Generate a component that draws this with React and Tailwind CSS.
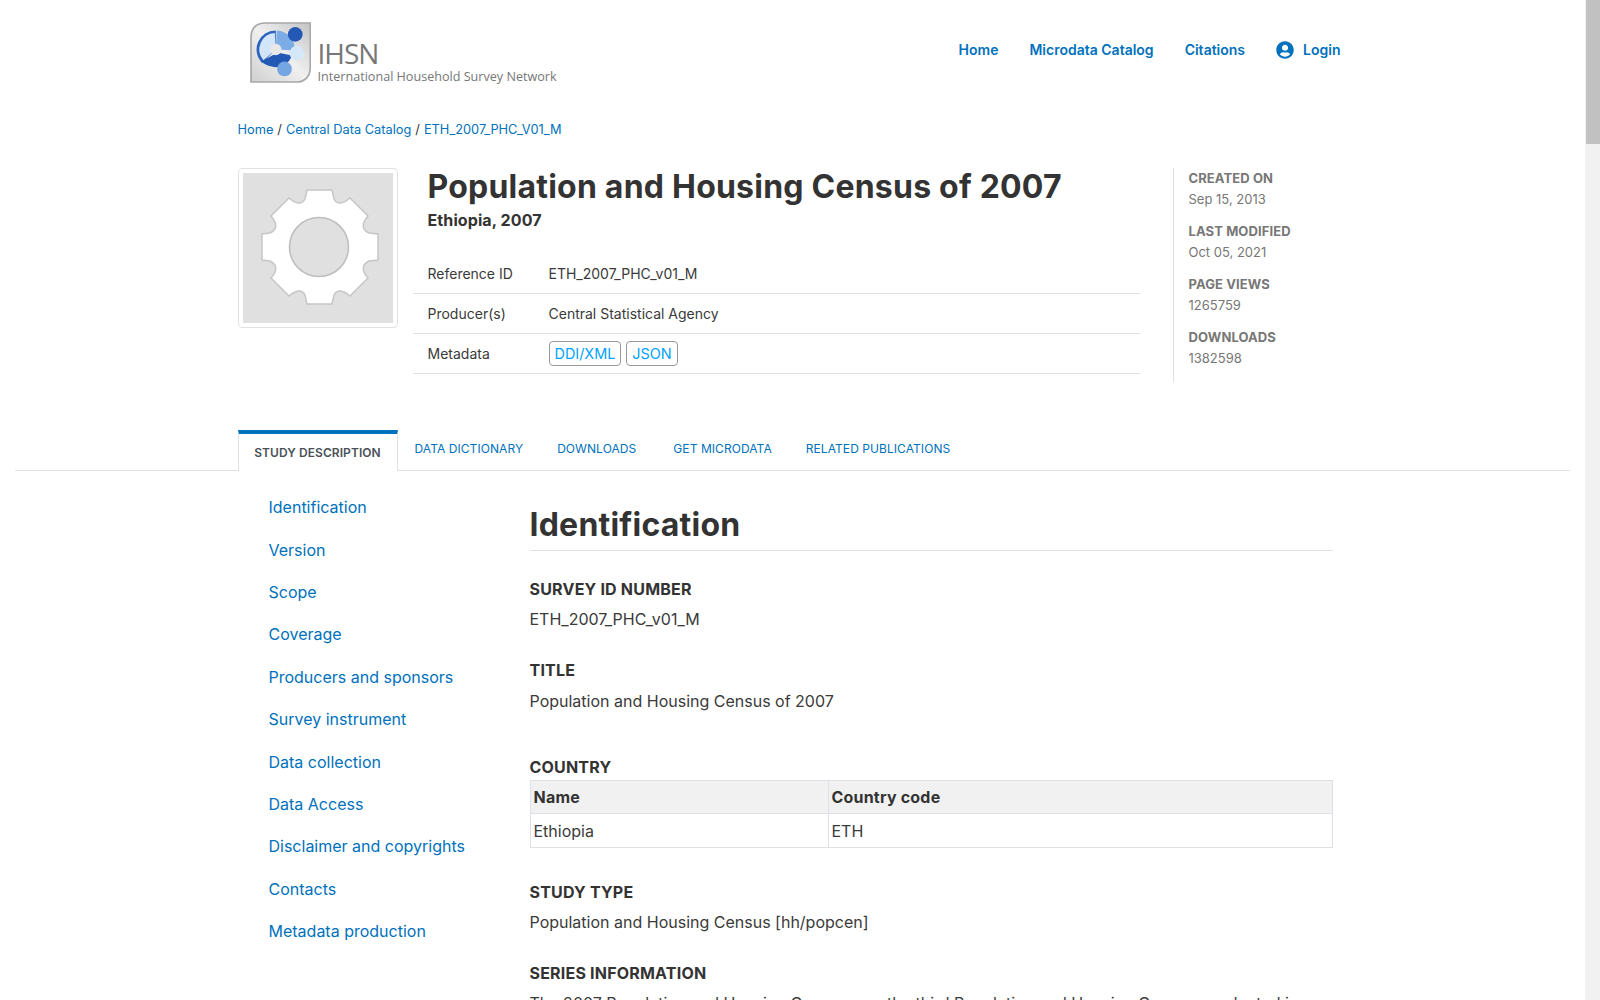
import { FaUserCircle } from "react-icons/fa";

const sideLinks = [
  "Identification",
  "Version",
  "Scope",
  "Coverage",
  "Producers and sponsors",
  "Survey instrument",
  "Data collection",
  "Data Access",
  "Disclaimer and copyrights",
  "Contacts",
  "Metadata production",
];

const stats = [
  ["CREATED ON", "Sep 15, 2013"],
  ["LAST MODIFIED", "Oct 05, 2021"],
  ["PAGE VIEWS", "1265759"],
  ["DOWNLOADS", "1382598"],
];

function LogoMark() {
  return (
    <svg width="61" height="61" viewBox="0 0 182 182" className="shrink-0">
      <defs>
        <linearGradient id="leaf" x1="0" y1="1" x2="1" y2="0">
          <stop offset="0" stopColor="#cfcfcf" />
          <stop offset="0.5" stopColor="#f0f0f0" />
          <stop offset="1" stopColor="#c4c4c4" />
        </linearGradient>
      </defs>
      <path d="M180 3 L45 3 C18 3 3 20 3 46 L3 179 L138 179 C164 179 180 162 180 136 Z" fill="url(#leaf)" stroke="#a8a8a8" strokeWidth="5" />
      <path d="M77 25 A57 57 0 0 0 36 122 L77 82 Z" fill="#2a62bd" />
      <path d="M74 33 A49 49 0 0 0 40 114 L77 82 Z" fill="#d3e5f8" />
      <path d="M80 25 A57 57 0 0 1 134 85 L77 82 Z" fill="#7bace6" />
      <path d="M34 118 L66 100 L85 92 L125 100 C115 130 85 140 65 133 C50 130 42 125 34 118 Z" fill="#2458b5" />
      <circle cx="135" cy="37" r="22" fill="#2458b5" />
      <circle cx="140" cy="93" r="22" fill="#d5e8f8" />
      <circle cx="103" cy="140" r="22" fill="#74a6e2" />
      <circle cx="77" cy="82" r="17" fill="#e8e8e8" />
    </svg>
  );
}

function GearThumb() {
  return (
    <svg width="150" height="150" viewBox="0 0 150 150">
      <rect width="150" height="150" fill="#e0e0e0" />
      <path
        d="M64 17 H89 L91 26 C94 32 100 31 107 25 L125 43 C119 50 118 56 126 60 L135 61 V87 L126 88 C118 92 119 98 125 105 L107 123 C100 117 94 116 91 122 L89 131 H64 L62 122 C59 116 53 117 46 123 L28 105 C34 98 35 92 27 88 L19 87 V61 L27 60 C35 56 34 50 28 43 L46 25 C53 31 59 32 62 26 Z"
        fill="#ffffff"
        stroke="#c6c6c6"
        strokeWidth="1.5"
      />
      <circle cx="76" cy="74" r="29.5" fill="#e0e0e0" stroke="#bdbdbd" strokeWidth="1.5" />
    </svg>
  );
}

function Field({ label, children, className, gap = "mt-[6px]" }) {
  return (
    <div className={className}>
      <div className="text-base leading-6 font-bold tracking-[0.2px] text-[#333]">{label}</div>
      <div className={`${gap} text-base leading-6 text-[#3a3a3a]`}>{children}</div>
    </div>
  );
}

export default function App() {
  return (
    <div className="flex h-screen overflow-hidden bg-white font-['Inter',sans-serif] text-[#333]">
      <div className="min-w-0 flex-1 px-[15px]">
        <div className="mx-auto w-[1110px]">
          {/* header */}
          <div className="flex h-[100px] items-center justify-between pl-3 pr-[7px]">
            <div className="flex items-start pt-[7px]">
              <LogoMark />
              <div className="mt-[19px] ml-[7px] font-['Open_Sans',sans-serif] text-[#777]">
                <div className="text-[28px] leading-[24px] tracking-[-1px]">IHSN</div>
                <div className="mt-1 text-[12.6px] leading-4">International Household Survey Network</div>
              </div>
            </div>
            <nav className="flex items-center text-sm font-semibold text-[#0071bc]">
              <a className="mr-[31px]">Home</a>
              <a className="mr-[31px]">Microdata Catalog</a>
              <a className="mr-[31px]">Citations</a>
              <FaUserCircle size={18} className="mr-[9px]" />
              <a>Login</a>
            </nav>
          </div>

          {/* breadcrumb */}
          <div className="mt-5 text-[12.8px] leading-5 text-[#333]">
            <a className="text-[#0071bc]">Home</a>
            <span className="mx-[4px]">/</span>
            <a className="text-[#0071bc]">Central Data Catalog</a>
            <span className="mx-[4px]">/</span>
            <a className="text-[#0071bc]">ETH_2007_PHC_V01_M</a>
          </div>

          {/* study header */}
          <div className="mt-7 flex">
            <div className="h-40 w-40 shrink-0 rounded border border-[#dee2e6] p-1">
              <GearThumb />
            </div>
            <div className="ml-[15px] w-[727px] shrink-0">
              <h1 className="pl-[15px] text-[32px] leading-[38px] font-bold tracking-[0.22px] text-[#333]">Population and Housing Census of 2007</h1>
              <div className="mt-[2px] pl-[15px] text-base leading-6 font-bold tracking-[0.1px]">Ethiopia, 2007</div>
              <div className="mt-[22px] text-sm text-[#3a3a3a]">
                <div className="flex h-10 items-center border-b border-[#dee2e6] pl-[15px]">
                  <div className="w-[121px]">Reference ID</div>
                  <div>ETH_2007_PHC_v01_M</div>
                </div>
                <div className="flex h-10 items-center border-b border-[#dee2e6] pl-[15px]">
                  <div className="w-[121px]">Producer(s)</div>
                  <div>Central Statistical Agency</div>
                </div>
                <div className="flex h-10 items-center border-b border-[#dee2e6] pl-[15px]">
                  <div className="w-[121px]">Metadata</div>
                  <div className="flex gap-[5px] text-[14.4px]">
                    <a className="rounded border border-[#999] px-[5px] py-px leading-[21px] text-[#00a2ff]">DDI/XML</a>
                    <a className="rounded border border-[#999] px-[5px] py-px leading-[21px] text-[#00a2ff]">JSON</a>
                  </div>
                </div>
              </div>
            </div>
            <div className="ml-[33px] h-[214px] border-l border-[#dee2e6] pl-[15px] text-[13px] leading-[21px] text-[#777]">
              {stats.map(([label, value]) => (
                <div key={label} className="mb-[11px]">
                  <div className="font-bold tracking-[0.1px]">{label}</div>
                  <div>{value}</div>
                </div>
              ))}
            </div>
          </div>
        </div>

        {/* tabs */}
        <div className="mt-[48px] border-b border-[#dee2e6]">
          <div className="mx-auto flex w-[1110px] text-xs tracking-[0.07px] text-[#0071bc]">
            <a className="-mb-px flex h-[41px] w-40 items-center justify-center border-x border-t-4 border-[#dee2e6] border-t-[#0071bc] bg-white font-semibold text-[#495057]">
              STUDY DESCRIPTION
            </a>
            <a className="flex h-[40px] items-center pb-[3px] pl-[17px] pr-[17px]">DATA DICTIONARY</a>
            <a className="flex h-[40px] items-center pb-[3px] pl-[17px] pr-[18px]">DOWNLOADS</a>
            <a className="flex h-[40px] items-center pb-[3px] pl-[19px] pr-[17px]">GET MICRODATA</a>
            <a className="flex h-[40px] items-center pb-[3px] pl-[17px] pr-[17px]">RELATED PUBLICATIONS</a>
          </div>
        </div>

        {/* body */}
        <div className="mx-auto flex w-[1110px]">
          <div className="w-[292px] shrink-0 pt-[15px] pl-[31px] text-base text-[#0071bc]">
            {sideLinks.map((link) => (
              <div key={link} className="flex h-[42.4px] items-center">
                {link}
              </div>
            ))}
          </div>
          <div className="w-[803px] shrink-0">
            <h2 className="mt-[35px] border-b border-[#dee2e6] pb-[6px] text-[32px] leading-[38px] font-bold tracking-[0.22px] text-[#333]">Identification</h2>
            <Field label="SURVEY ID NUMBER" className="mt-[26px]">ETH_2007_PHC_v01_M</Field>
            <Field label="TITLE" className="mt-[27px]" gap="mt-[7px]">Population and Housing Census of 2007</Field>
            <div className="mt-[42px] text-base leading-6 font-bold tracking-[0.2px]">COUNTRY</div>
            <div className="mt-px grid grid-cols-[298px_1fr] border border-[#dee2e6] text-base">
              <div className="flex h-[33px] items-center border-b border-r border-[#dee2e6] bg-[#f1f1f1] px-[3px] font-bold tracking-[0.2px]">Name</div>
              <div className="flex h-[33px] items-center border-b border-[#dee2e6] bg-[#f1f1f1] px-[3px] font-bold tracking-[0.2px]">Country code</div>
              <div className="flex h-[33px] items-center border-r border-[#dee2e6] px-[3px] text-[#3a3a3a]">Ethiopia</div>
              <div className="flex h-[33px] items-center px-[3px] text-[#3a3a3a]">ETH</div>
            </div>
            <Field label="STUDY TYPE" className="mt-[32px]">Population and Housing Census [hh/popcen]</Field>
            <Field label="SERIES INFORMATION" className="mt-[27px]">
              The 2007 Population and Housing Census was the third Population and Housing Census conducted in
            </Field>
          </div>
        </div>
      </div>

      {/* scrollbar */}
      <div className="w-[15px] shrink-0 bg-[#f1f1f1]">
        <div className="ml-px h-[144px] bg-[#c1c1c1]" />
      </div>
    </div>
  );
}
